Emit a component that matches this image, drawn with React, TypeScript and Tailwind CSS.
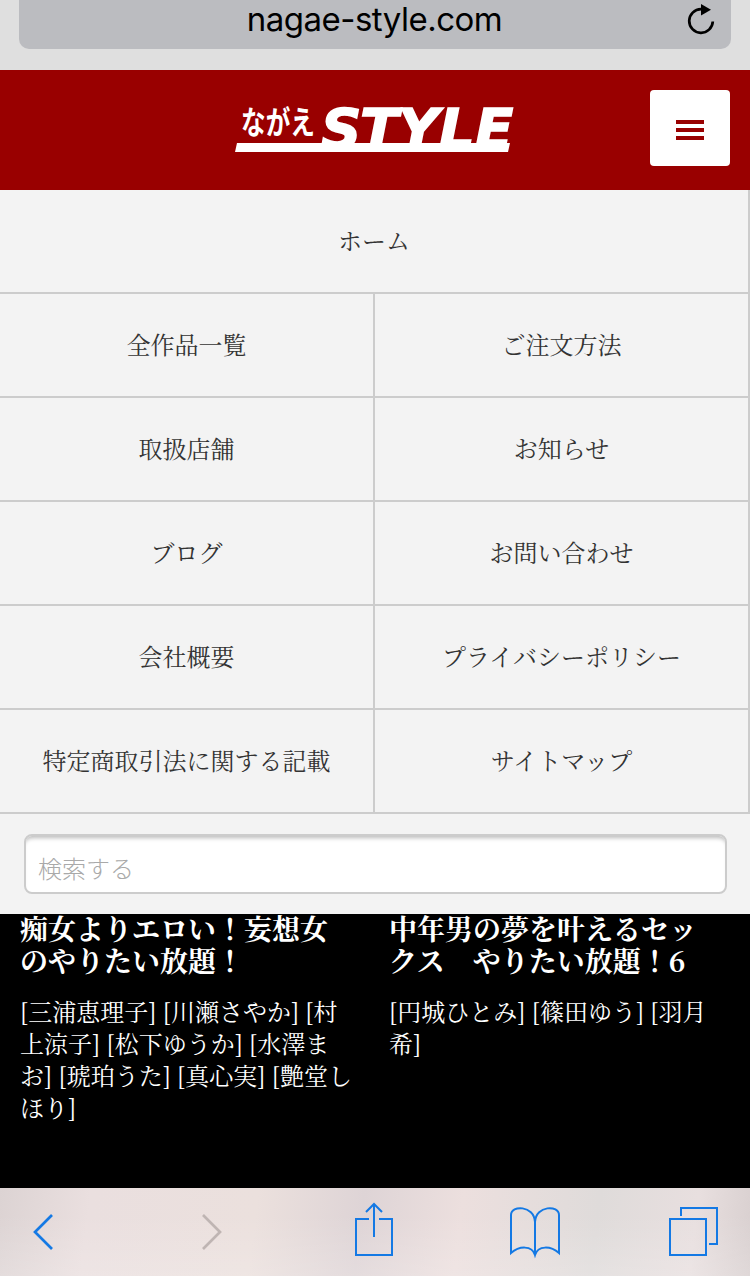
const menuItems = [
  '全作品一覧', 'ご注文方法',
  '取扱店舗', 'お知らせ',
  'ブログ', 'お問い合わせ',
  '会社概要', 'プライバシーポリシー',
  '特定商取引法に関する記載', 'サイトマップ',
]

const products = [
  {
    title: ['痴女よりエロい！妄想女', 'のやりたい放題！'],
    cast: ['[三浦恵理子] [川瀬さやか] [村', '上涼子] [松下ゆうか] [水澤ま', 'お] [琥珀うた] [真心実] [艶堂し', 'ほり]'],
  },
  {
    title: ['中年男の夢を叶えるセッ', 'クス　やりたい放題！6'],
    cast: ['[円城ひとみ] [篠田ゆう] [羽月', '希]'],
  },
]

const serif = "font-['Noto_Serif_CJK_JP','Noto_Sans_CJK_JP',serif]"
const cellClass =
  'flex h-[104px] items-center justify-center border-r-2 border-b-2 border-[#ccc] pb-[3px] text-2xl leading-8 font-normal text-[#333]'

function AddressBar() {
  return (
    <div className="h-[70px] bg-[#dfdfdf] px-[19px]">
      <div className="flex h-[49px] items-start rounded-b-[10px] bg-[#bbbcc0] pr-[15px]">
        <span className="w-[52px]" />
        <span className="-mt-0.5 flex-1 text-center font-['Inter',sans-serif] text-[33px] leading-[42px] tracking-[-0.5px] text-black">
          nagae-style.com
        </span>
        <svg width="30" height="38" viewBox="0 0 30 38" className="ml-2">
          <path d="M15 9.2A11.8 11.8 0 1 0 26.8 21.5" fill="none" stroke="#000" strokeWidth="2.7" />
          <path d="M15 4L25 9.7L15 15.5Z" />
        </svg>
      </div>
    </div>
  )
}

function Logo() {
  return (
    <svg width="290" height="60" viewBox="0 0 290 60" fill="#fff">
      <text
        x="6"
        y="30"
        textLength="74"
        lengthAdjust="spacingAndGlyphs"
        className="font-['Noto_Sans_CJK_JP',sans-serif] text-[32px] font-bold"
      >
        ながえ
      </text>
      <text
        x="86 125 163 204 240"
        y="44"
        stroke="#fff"
        strokeWidth="1.6"
        className="font-['DejaVu_Sans',sans-serif] text-[56px] font-bold italic"
      >
        STYLE
      </text>
      <path d="M2 39H275L273 48H0Z" />
    </svg>
  )
}

function SiteHeader() {
  return (
    <header className="flex h-[120px] items-start bg-[#990000] pt-5 pr-5">
      <div className="ml-[235px] pt-3.5">
        <Logo />
      </div>
      <button className="ml-auto flex h-[76px] w-20 flex-col items-center justify-center gap-1 rounded-[4px] bg-white pt-1">
        <span className="h-1 w-7 bg-[#990000]" />
        <span className="h-1 w-7 bg-[#990000]" />
        <span className="h-1 w-7 bg-[#990000]" />
      </button>
    </header>
  )
}

function Toolbar() {
  return (
    <nav className="h-[88px] bg-[linear-gradient(180deg,transparent_30%,#ffffff30_100%),linear-gradient(97deg,#dcd3d3_0%,#eadfdf_12%,#ebe0dd_34%,#ded4d6_48%,#ecdfde_61%,#dfdbda_79%,#e8dfdf_92%,#d8cfcf_100%)]">
      <svg width="750" height="88" viewBox="0 0 750 88" fill="none" stroke="#1479e4" strokeWidth="2">
        <path d="M52 27L35 44L52 61" strokeWidth="2.7" />
        <path d="M203 27L220 44L203 61" stroke="#bfb5b3" strokeWidth="2.7" />
        <path d="M369 31H356V67H392V31H379M374 49V16M366 24L374 16L382 24" />
        <path d="M535 67V34C534 17 511 17 511 27V65C519 58 532 57 535 67C538 57 551 58 559 65V27C559 17 536 17 535 34" />
        <path d="M670 31H706V67H670ZM681 28V20H717V56H709" />
      </svg>
    </nav>
  )
}

export default function App() {
  return (
    <div className={`${serif} flex h-[1276px] w-[750px] flex-col overflow-hidden bg-black`}>
      <AddressBar />
      <SiteHeader />

      <div className="bg-[#f3f3f3]">
        <a className={cellClass}>ホーム</a>
        <div className="grid grid-cols-2">
          {menuItems.map((item) => (
            <a key={item} className={cellClass}>{item}</a>
          ))}
        </div>
        <div className="h-[100px] pt-5 pr-[23px] pl-6">
          <input
            placeholder="検索する"
            className="block h-[60px] w-full rounded-[8px] border-2 border-[#ccc] bg-white px-3 pt-1.5 font-['Noto_Sans_CJK_JP',sans-serif] text-2xl font-light shadow-[inset_0_5px_4px_-3px_#bbb] placeholder:text-[#a9a9a9]"
          />
        </div>
      </div>

      <main className="-mt-0.5 grid flex-1 grid-cols-[369px_381px] text-white">
        {products.map((p) => (
          <article key={p.title[0]} className="pl-5 whitespace-nowrap">
            <h2 className="text-[28px] leading-8 font-bold">
              {p.title.map((line) => (
                <span key={line} className="block h-8">{line}</span>
              ))}
            </h2>
            <p className="mt-[19px] text-2xl leading-8 font-normal">
              {p.cast.map((line) => (
                <span key={line} className="block h-8">{line}</span>
              ))}
            </p>
          </article>
        ))}
      </main>

      <Toolbar />
    </div>
  )
}
